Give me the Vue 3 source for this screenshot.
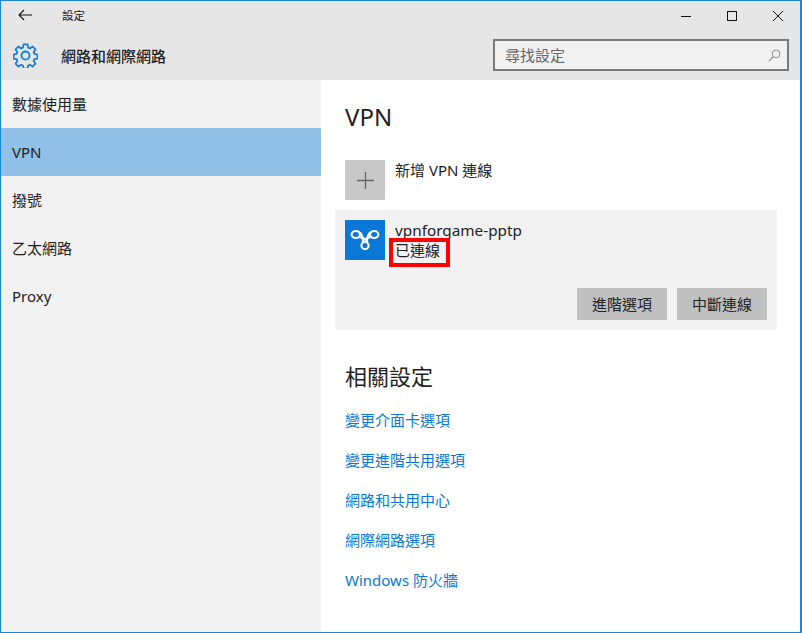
<script setup>
const navItems = [
  { label: '數據使用量' },
  { label: 'VPN', active: true, latin: true },
  { label: '撥號' },
  { label: '乙太網路' },
  { label: 'Proxy', latin: true },
]
const links = ['變更介面卡選項', '變更進階共用選項', '網路和共用中心', '網際網路選項', 'Windows 防火牆']
</script>

<template>
  <div class="window">
    <header class="header">
      <div class="titlebar">
        <svg class="back" viewBox="0 0 14 12" width="14" height="12">
          <path d="M6 1 1 6l5 5M1 6h13" fill="none" stroke="#111" stroke-width="1.1" />
        </svg>
        <span class="app-title">設定</span>
        <div class="controls">
          <svg viewBox="0 0 10 10" width="10" height="10"><path d="M0 5.5h10" stroke="#111" stroke-width="1" /></svg>
          <svg viewBox="0 0 10 10" width="10" height="10"><rect x=".5" y=".5" width="9" height="9" fill="none" stroke="#111" /></svg>
          <svg viewBox="0 0 10 10" width="10" height="10"><path d="M0 0l10 10M10 0 0 10" stroke="#111" stroke-width="1" /></svg>
        </div>
      </div>
      <div class="pagebar">
        <svg class="gear" viewBox="0 0 26 26" width="25" height="25">
          <path d="M10.9 1.500h4.200l.6 3.300 1.900.8 2.800-1.900 3 3-1.900 2.800.8 1.900 3.200.6v4.200l-3.200.6-.8 1.900 1.900 2.800-3 3-2.800-1.900-1.900.8-.6 3.200h-4.200l-.6-3.200-1.900-.8-2.800 1.900-3-3 1.900-2.800-.8-1.900-3.200-.6v-4.200l3.200-.6.8-1.900-1.900-2.800 3-3 2.800 1.900 1.900-.8z" fill="none" stroke="#1580dc" stroke-width="1.900" stroke-linejoin="round" />
          <circle cx="13" cy="13" r="4.200" fill="none" stroke="#1580dc" stroke-width="1.900" />
        </svg>
        <h1 class="page-title">網路和網際網路</h1>
        <div class="search">
          <span>尋找設定</span>
          <svg viewBox="0 0 14 14" width="13" height="13">
            <circle cx="8.700" cy="5.300" r="4.200" fill="none" stroke="#888" stroke-width="1" />
            <path d="M5.700 8.300 1 13" stroke="#888" stroke-width="1.100" />
          </svg>
        </div>
      </div>
    </header>

    <div class="body">
      <nav class="sidebar">
        <div v-for="item in navItems" :key="item.label" class="nav-item" :class="{ active: item.active, latin: item.latin }">{{ item.label }}</div>
      </nav>

      <main class="content">
        <h2 class="heading">VPN</h2>
        <div class="add-row">
          <div class="add-tile">
            <svg viewBox="0 0 17 17" width="17" height="17"><path d="M8.500 0v17M0 8.500h17" stroke="#666" stroke-width="1.300" /></svg>
          </div>
          <span class="add-label">新增 VPN 連線</span>
        </div>

        <section class="card">
          <div class="card-top">
            <div class="vpn-tile">
              <svg viewBox="0 0 40 40" width="40" height="40">
                <g fill="none" stroke="#fff" stroke-width="2.100">
                  <ellipse cx="10.800" cy="14.500" rx="4.200" ry="3.500" />
                  <ellipse cx="29.200" cy="14.500" rx="4.200" ry="3.500" />
                  <circle cx="20" cy="25.500" r="3.600" />
                  <path d="M13.500 11.800C16.500 13 18 17 18 22.500M26.500 11.800C23.500 13 22 17 22 22.500" />
                  <path d="M14 17C16.500 18 18.500 17.500 20 19.500C21.500 17.500 23.500 18 26 17" />
                </g>
              </svg>
            </div>
            <div class="vpn-text">
              <div class="vpn-name">vpnforgame-pptp</div>
              <div class="vpn-status">已連線</div>
            </div>
          </div>
          <div class="actions">
            <button class="btn">進階選項</button>
            <button class="btn">中斷連線</button>
          </div>
          <div class="highlight"></div>
        </section>

        <h2 class="related">相關設定</h2>
        <ul class="links">
          <li v-for="link in links" :key="link">{{ link }}</li>
        </ul>
      </main>
    </div>
  </div>
</template>

<style>
html, body { margin: 0; background: #fff; }
</style>

<style scoped>
* { box-sizing: border-box; }
.window {
  width: 802px; height: 633px; display: flex; flex-direction: column; overflow: hidden;
  border: 1px solid #1a86d8; border-right-width: 2px; background: #fff;
  font-family: "Noto Sans", "Noto Sans CJK TC", sans-serif; color: #111;
}
.header { height: 79px; flex: none; background: #e6e6e6; display: flex; flex-direction: column; }
.titlebar { height: 29px; display: flex; align-items: center; }
.back { margin-left: 17px; margin-bottom: 2px; flex: none; }
.app-title { margin-left: 30px; margin-bottom: 2px; font-size: 11.5px; color: #222; }
.controls { margin-left: auto; margin-right: 17px; display: flex; gap: 36px; align-items: center; }
.pagebar { flex: 1; display: flex; align-items: center; }
.gear { margin-left: 12px; flex: none; margin-top: 1px; }
.page-title { margin: 2px 0 0 23px; font-size: 15px; line-height: 20px; font-weight: 500; color: #222; }
.search {
  margin-left: auto; margin-right: 11px; width: 296px; height: 32px;
  border: 2px solid #7a7a7a; background: #f1f1f1; display: flex; align-items: center;
  justify-content: space-between; padding: 0 6px 0 10px; font-size: 15px; line-height: 20px; color: #666;
}
.body { flex: 1; display: flex; min-height: 0; }
.sidebar { width: 320px; flex: none; background: #f2f2f2; }
.nav-item { height: 48px; padding: 0 0 2px 11px; display: flex; align-items: center; font-size: 15px; color: #222; }
.nav-item.latin { padding-bottom: 0; }
.nav-item.active { background: #91c1e8; }
.content { flex: 1; padding: 0 0 0 14px; }
.heading { margin: 20px 0 0 10px; font-size: 24px; line-height: 33px; font-weight: 400; color: #222; }
.add-row { margin: 27px 0 0 10px; display: flex; height: 40px; }
.add-tile { width: 40px; height: 40px; background: #c8c8c8; display: flex; align-items: center; justify-content: center; }
.add-label { margin-left: 10px; font-size: 15px; line-height: 20px; color: #222; }
.card { position: relative; margin-top: 10px; width: 442px; height: 120px; background: #f2f2f2; padding: 10px; display: flex; flex-direction: column; }
.card-top { display: flex; }
.vpn-tile { width: 40px; height: 40px; background: #0a78d7; }
.vpn-text { margin-left: 10px; font-size: 15px; line-height: 20px; color: #222; }
.vpn-name { font-size: 15.3px; }
.actions { margin-top: auto; display: flex; gap: 10px; justify-content: flex-end; }
.btn { width: 90px; height: 32px; border: 0; padding: 0; background: #c0c0c0; font: inherit; font-size: 15px; line-height: 20px; color: #222; }
.highlight { position: absolute; left: 54px; top: 28px; width: 61px; height: 29px; border: 4px solid #f00; }
.related { margin: 30px 0 0 10px; font-size: 22px; line-height: 32px; font-weight: 400; color: #222; }
.links { list-style: none; margin: 7px 0 0 10px; padding: 0; }
.links li { height: 40px; display: flex; align-items: center; font-size: 15px; color: #0a78d7; }
</style>
